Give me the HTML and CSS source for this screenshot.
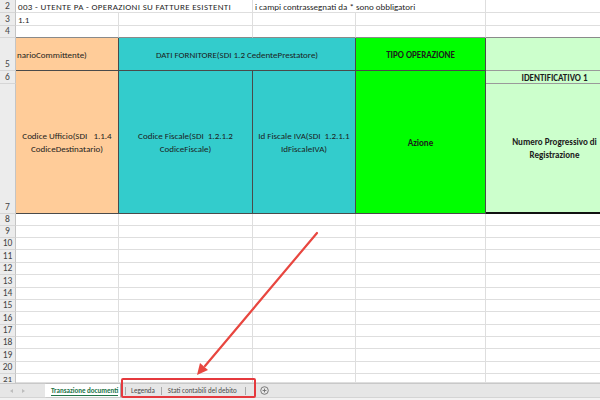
FILE: index.html
```html
<!DOCTYPE html>
<html lang="it">
<head>
<meta charset="utf-8">
<title>Transazione documenti</title>
<link rel="stylesheet" href="styles.css">
</head>
<body>
<div class="sheet">
  <div class="grid">
    <!-- row 2 -->
    <div class="rh">2</div>
    <div class="c span2 caps">003 - UTENTE PA - OPERAZIONI SU FATTURE ESISTENTI</div>
    <div class="c span2">i campi contrassegnati da * sono obbligatori</div>
    <div class="c"></div>
    <!-- row 3 -->
    <div class="rh">3</div>
    <div class="c">1.1</div><div class="c"></div><div class="c"></div><div class="c"></div><div class="c"></div>
    <!-- row 4 -->
    <div class="rh">4</div>
    <div class="c top"></div><div class="c top"></div><div class="c top"></div><div class="c top"></div><div class="c top"></div>
    <!-- row 5 -->
    <div class="rh">5</div>
    <div class="hdr orange left">narioCommittente)</div>
    <div class="hdr teal span2">DATI FORNITORE(SDI 1.2 CedentePrestatore)</div>
    <div class="hdr green bold">TIPO OPERAZIONE</div>
    <div class="hdr lgreen"></div>
    <!-- row 6 -->
    <div class="rh">6</div>
    <div class="hdr orange tall">Codice Ufficio(SDI   1.1.4
CodiceDestinatario)</div>
    <div class="hdr teal tall">Codice Fiscale(SDI  1.2.1.2
CodiceFiscale)</div>
    <div class="hdr teal tall">Id Fiscale IVA(SDI  1.2.1.1
IdFiscaleIVA)</div>
    <div class="hdr green bold tall">Azione</div>
    <div class="hdr lgreen bold">IDENTIFICATIVO 1</div>
    <!-- row 7 -->
    <div class="rh">7</div>
    <div class="hdr lgreen bold last">Numero Progressivo di
Registrazione</div>
    <!-- rows 8 - 21 -->
    <div class="rh">8</div><div class="c"></div><div class="c"></div><div class="c"></div><div class="c"></div><div class="c"></div>
    <div class="rh">9</div><div class="c"></div><div class="c"></div><div class="c"></div><div class="c"></div><div class="c"></div>
    <div class="rh">10</div><div class="c"></div><div class="c"></div><div class="c"></div><div class="c"></div><div class="c"></div>
    <div class="rh">11</div><div class="c"></div><div class="c"></div><div class="c"></div><div class="c"></div><div class="c"></div>
    <div class="rh">12</div><div class="c"></div><div class="c"></div><div class="c"></div><div class="c"></div><div class="c"></div>
    <div class="rh">13</div><div class="c"></div><div class="c"></div><div class="c"></div><div class="c"></div><div class="c"></div>
    <div class="rh">14</div><div class="c"></div><div class="c"></div><div class="c"></div><div class="c"></div><div class="c"></div>
    <div class="rh">15</div><div class="c"></div><div class="c"></div><div class="c"></div><div class="c"></div><div class="c"></div>
    <div class="rh">16</div><div class="c"></div><div class="c"></div><div class="c"></div><div class="c"></div><div class="c"></div>
    <div class="rh">17</div><div class="c"></div><div class="c"></div><div class="c"></div><div class="c"></div><div class="c"></div>
    <div class="rh">18</div><div class="c"></div><div class="c"></div><div class="c"></div><div class="c"></div><div class="c"></div>
    <div class="rh">19</div><div class="c"></div><div class="c"></div><div class="c"></div><div class="c"></div><div class="c"></div>
    <div class="rh">20</div><div class="c"></div><div class="c"></div><div class="c"></div><div class="c"></div><div class="c"></div>
    <div class="rh cut">21</div><div class="c"></div><div class="c"></div><div class="c"></div><div class="c"></div><div class="c"></div>
  </div>
</div>
<div class="tabbar">
  <div class="nav"><span class="tri tri-l"></span><span class="tri tri-r"></span></div>
  <div class="tab active">Transazione documenti</div>
  <div class="sep first"></div>
  <div class="tab t-leg">Legenda</div>
  <div class="sep"></div>
  <div class="tab t-stati">Stati contabili del debito</div>
  <div class="sep"></div>
  <div class="add">
    <svg width="9" height="9" viewBox="0 0 9 9"><circle cx="4.5" cy="4.5" r="3.8" fill="none" stroke="#6f6f6f" stroke-width="0.9"/><path d="M4.5 2.6v3.8M2.6 4.5h3.8" stroke="#6f6f6f" stroke-width="0.9"/></svg>
  </div>
</div>
<div class="status"></div>
<div class="highlight"></div>
<svg class="arrow" width="600" height="400" viewBox="0 0 600 400">
  <line x1="317" y1="233" x2="205" y2="366" stroke="#e8463f" stroke-width="2.2" stroke-linecap="round"/>
  <polygon points="197,375 208,370 200,363" fill="#e8463f"/>
</svg>
</body>
</html>
```

FILE: styles.css
```css
* { box-sizing: border-box; }

body {
  margin: 0;
  width: 600px;
  height: 400px;
  overflow: hidden;
  position: relative;
  background: #ffffff;
  color: #1f1f1f;
  font-family: Carlito, Lato, "Liberation Sans", sans-serif;
  font-size: 9px;
}

.sheet {
  width: 600px;
  height: 383px;
  overflow: hidden;
}

.grid {
  display: grid;
  width: 624px;
  grid-template-columns: 16px 103px 134px 103px 130px 138px;
  grid-template-rows:
    13px 13px 12px 33px 13px 130px 12px
    12px 12px 13px 12px 13px 12px 12px 13px 12px 12px 13px 12px
    9px;
}

.rh {
  background: #ececec;
  color: #444;
  border-right: 1px solid #c4c4c4;
  border-bottom: 1px solid #d6d6d6;
  display: flex;
  align-items: flex-end;
  justify-content: center;
  line-height: 11px;
  font-size: 9.5px;
  overflow: hidden;
}

.rh.cut {
  align-items: flex-start;
  border-bottom: 0;
  font-size: 9px;
  line-height: 9px;
  overflow: visible;
}

.c {
  border-right: 1px solid #dedede;
  border-bottom: 1px solid #dedede;
  padding: 0 1px 0 2px;
  white-space: pre;
  overflow: hidden;
  display: flex;
  align-items: flex-end;
  line-height: 11px;
}

.c.caps { letter-spacing: 0.32px; }
.c.top { border-bottom-color: #8a8a8a; }

.span2 { grid-column: span 2; }
.tall { grid-row: span 2; border-bottom: 2px solid #111; }
.last { border-bottom: 2px solid #111; }

.hdr {
  display: flex;
  align-items: center;
  justify-content: center;
  text-align: center;
  white-space: pre;
  overflow: hidden;
  line-height: 13px;
  border-right: 1px solid #4a4a4a;
  border-bottom: 1px solid #4a4a4a;
  color: #1c1c1c;
}

.hdr.left { justify-content: flex-start; padding-left: 1px; }

.orange { background: #ffcc99; }
.teal { background: #33cccc; }
.green { background: #00ff00; }
.lgreen { background: #ccffcc; border-right-color: #a8a8a8; border-bottom-color: #9a9a9a; }
.lgreen.last { border-bottom: 2px solid #111; }
.bold { font-weight: 700; }

.tabbar {
  height: 14px;
  background: #e6e6e6;
  border-top: 1px solid #c8c8c8;
  display: flex;
  align-items: stretch;
  font-size: 7px;
  color: #4a4a4a;
}

.nav {
  width: 45px;
  display: flex;
  align-items: center;
  padding-left: 10px;
  gap: 9px;
}

.tri {
  width: 0;
  height: 0;
  border-top: 2.5px solid transparent;
  border-bottom: 2.5px solid transparent;
}
.tri-l { border-right: 3px solid #bdbdbd; }
.tri-r { border-left: 3px solid #bdbdbd; }

.tab {
  display: flex;
  align-items: center;
  white-space: nowrap;
}

.tab.active {
  width: 75px;
  padding: 0 0 0 6px;
  overflow: hidden;
  background: #ffffff;
  color: #217346;
  font-weight: 700;
  box-shadow: 1px 0 1px rgba(0,0,0,0.25);
  position: relative;
}

.tab.active::after {
  content: "";
  position: absolute;
  left: 6px;
  right: 2px;
  bottom: 1px;
  height: 1.5px;
  background: #217346;
}

.t-leg { padding: 0 6px 0 5px; }
.t-stati { padding: 0 8px 0 6px; }

.sep {
  width: 1px;
  background: #a8a8a8;
  margin: 3px 0 2px;
}

.sep.first { margin-left: 5px; }

.add {
  display: flex;
  align-items: center;
  padding-left: 14px;
}

.status {
  height: 3px;
  background: #f2f2f2;
  border-top: 1px solid #d4d4d4;
}

.highlight {
  position: absolute;
  left: 121px;
  top: 378px;
  width: 135px;
  height: 20px;
  border: 2px solid #e5393d;
  border-radius: 2px;
}

.arrow {
  position: absolute;
  left: 0;
  top: 0;
  pointer-events: none;
}
```
